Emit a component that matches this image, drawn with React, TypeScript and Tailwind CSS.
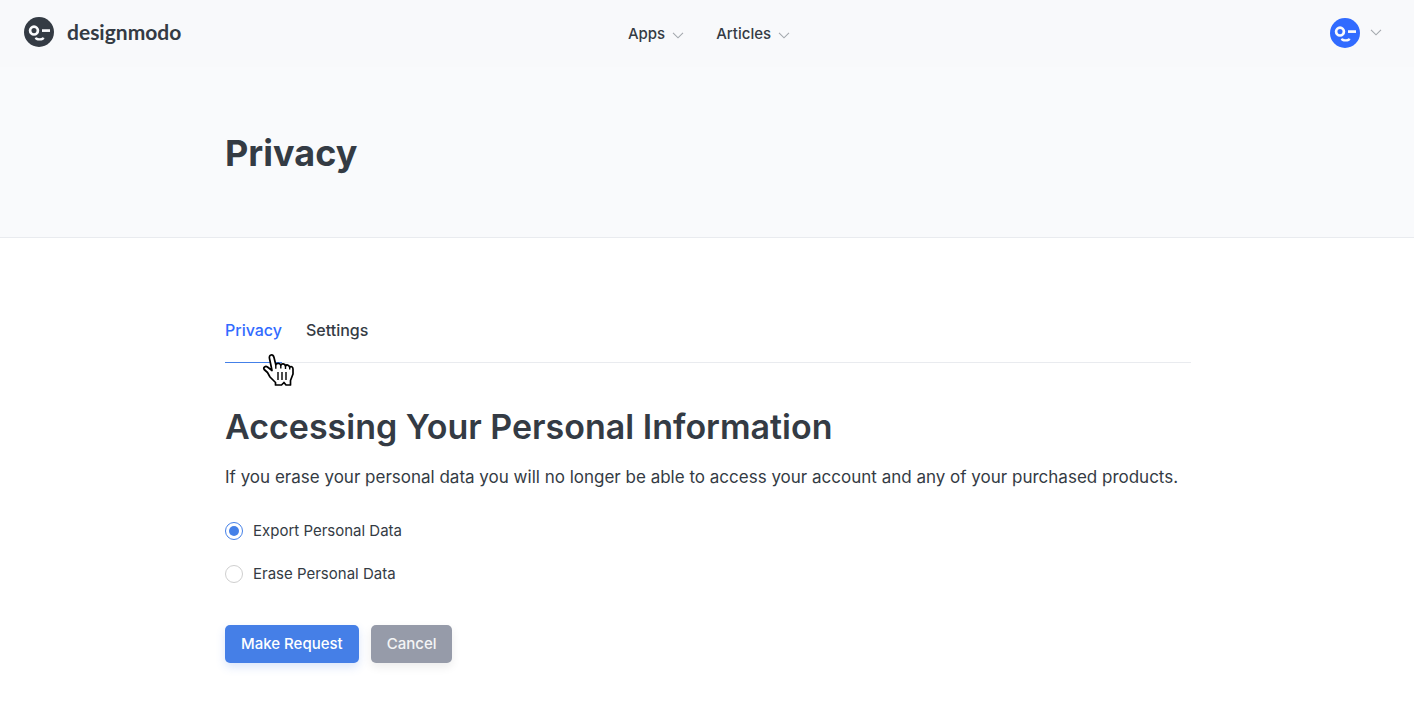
import { useState } from 'react';

const REQUESTS = [
  { id: 'export', label: 'Export Personal Data' },
  { id: 'erase', label: 'Erase Personal Data' },
];

function Face({ className }: { className: string }) {
  return (
    <svg viewBox="0 0 30 30" className={`h-[30px] w-[30px] ${className}`} aria-hidden="true">
      <circle cx="15" cy="15" r="15" fill="currentColor" />
      <g fill="none" stroke="#f9fafc">
        <circle cx="10" cy="13.6" r="3.900" strokeWidth="2.700" />
        <path d="M18 13.600h8" strokeWidth="2.700" />
        <path d="M11.800 20.600c.6 2.400 7 2.400 7.600 0" strokeWidth="2.300" />
      </g>
    </svg>
  );
}

function Chevron() {
  return (
    <svg viewBox="0 0 12 7" className="h-[7px] w-3 text-[#a3a8ae]" fill="none" aria-hidden="true">
      <path d="M1 .8 6 5.800 11 .8" stroke="currentColor" strokeWidth="1.1" />
    </svg>
  );
}

function NavButton({ label }: { label: string }) {
  return (
    <button type="button" className="flex items-center gap-[7px]">
      {label}
      <span className="pt-1">
        <Chevron />
      </span>
    </button>
  );
}

function HandCursor() {
  return (
    <svg
      viewBox="0 0 40 40"
      className="pointer-events-none absolute top-8 left-[34px] h-10 w-10"
      aria-hidden="true"
    >
      <path
        d="M16.500 35v-2.500L11 27 8.500 22.500 5.200 19.500C3.800 17.300 6.500 15.700 8.500 17l4.500 3.500L10.500 8.500C9.500 4.300 14 3.600 15 7.500l1.800 7.300c.8-2 4.200-2 5 .4.8-2 4-1.800 4.700.8.900-1.700 3.600-1.200 4.200 1.200 1.200-1.200 3.300-.5 3.300 1.800V24l-2.500 6.500V35H27l-2-2.500-2.500 2.500z"
        fill="white"
        stroke="black"
        strokeWidth="1.700"
        strokeLinejoin="round"
      />
      <path
        d="M16.800 14.800v4M21.800 15.200v3.300M26.500 16v3M30.700 17.200v2.300M19 22v8M23 22v8M27 22v8"
        stroke="black"
        strokeWidth="1.400"
      />
    </svg>
  );
}

export default function App() {
  const [request, setRequest] = useState('export');

  return (
    <div className="min-h-screen bg-white font-['Inter',sans-serif] text-[#343b44]">
      <div className="border-b border-[#e9ebef] bg-[#f9fafc]">
        <header className="grid h-[67px] grid-cols-[1fr_auto_1fr] items-center bg-[#f8f9fb] pr-8 pl-6">
          <a href="#" className="flex items-center gap-[13px] pb-1">
            <Face className="text-[#343b44]" />
            <span className="font-['Lato',sans-serif] text-[21px] leading-6 font-bold">designmodo</span>
          </a>

          <nav className="ml-3 flex gap-8 text-[15px] leading-6 font-medium">
            <NavButton label="Apps" />
            <NavButton label="Articles" />
          </nav>

          <button type="button" aria-label="Account" className="flex items-center gap-2.5 justify-self-end pb-0.5">
            <Face className="text-[#316bff]" />
            <Chevron />
          </button>
        </header>

        <div className="pt-[62px] pr-4 pb-[60px] pl-[18px]">
          <div className="mx-auto max-w-[966px]">
            <h1 className="text-[36px] leading-12 font-bold">Privacy</h1>
          </div>
        </div>
      </div>

      <main className="pt-20 pr-4 pb-10 pl-[18px]">
        <div className="mx-auto max-w-[966px]">
          <nav className="relative flex gap-6 border-b border-[#e9ebef] text-[16px] leading-6 font-medium">
            <a href="#privacy" className="-mb-px border-b border-[#4480e8] pb-5 text-[#316bff]">
              Privacy
            </a>
            <a href="#settings" className="pb-5">
              Settings
            </a>
            <HandCursor />
          </nav>

          <h2 className="mt-10 text-[34px] leading-12 font-semibold">Accessing Your Personal Information</h2>
          <p className="mt-3 text-[17px] leading-7">
            If you erase your personal data you will no longer be able to access your account and any of your purchased
            products.
          </p>

          <form>
            <div className="mt-7 flex flex-col items-start gap-[19px]">
              {REQUESTS.map(({ id, label }) => (
                <label key={id} className="flex items-center gap-2.5 text-[15px] leading-6">
                  <input
                    type="radio"
                    name="request"
                    value={id}
                    checked={request === id}
                    onChange={() => setRequest(id)}
                    className="h-[18px] w-[18px] appearance-none rounded-full border border-[#cfcfcf] bg-white bg-clip-content p-[3px] checked:border-[#4480e8] checked:bg-[#4480e8]"
                  />
                  {label}
                </label>
              ))}
            </div>

            <div className="mt-[39px] flex gap-3 text-[15px] leading-[22px] font-medium text-white">
              <button
                type="button"
                className="rounded-[5px] bg-[#457fe7] px-4 py-2 shadow-[0_4px_10px] shadow-[#457fe7]/20"
              >
                Make Request
              </button>
              <button
                type="button"
                className="rounded-[5px] bg-[#969ba9] px-4 py-2 text-white/90 shadow-[0_4px_10px] shadow-black/8"
              >
                Cancel
              </button>
            </div>
          </form>
        </div>
      </main>
    </div>
  );
}
